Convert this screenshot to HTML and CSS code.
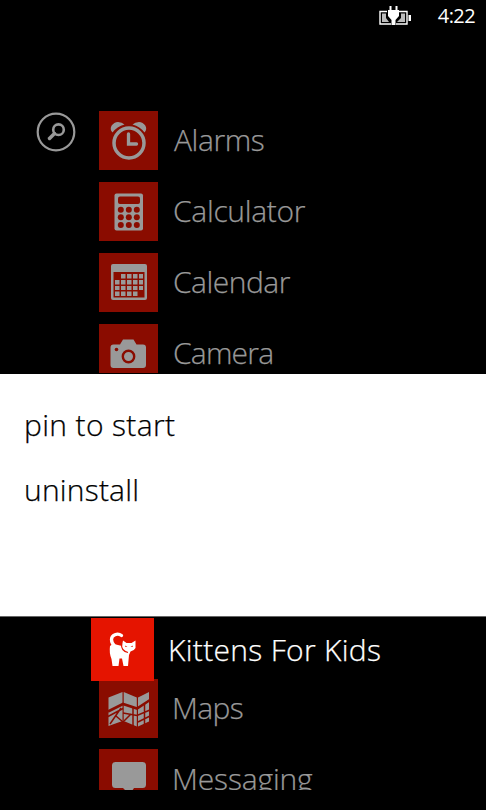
FILE: index.html
```html
<!DOCTYPE html>
<html lang="en">
<head>
  <meta charset="utf-8">
  <title>Apps</title>
  <link rel="stylesheet" href="styles.css">
</head>
<body>
  <div class="phone">
    <section class="top">
      <header class="status-bar">
        <svg class="battery" width="32" height="20" viewBox="0 0 32 20">
          <path d="M8 5.500H1V18H12M20 5.500H28V18H17" fill="none" stroke="#fff" stroke-width="1.400"/>
          <path d="M3 7.500H7V12L10 16H3ZM22 7.500H26V16H18L22 12Z" fill="#bbb"/>
          <path d="M29.500 9H32v6h-2.500z" fill="#fff"/>
          <path d="M10.500 0h2v4h4V0h2v4H20v6l-3.500 4v5h-4v-5L9 10V4h1.500z" fill="#fff"/>
        </svg>
        <span class="clock">4:22</span>
      </header>

      <div class="content">
        <svg class="search" width="40" height="40" viewBox="0 0 40 40" fill="none" stroke="#999">
          <circle cx="20" cy="20" r="18.300" stroke-width="2.200"/>
          <circle cx="22.500" cy="17.700" r="5.300" stroke-width="2.600"/>
          <path d="M18.500 21.500L13.500 26.500" stroke-width="3.500" stroke-linecap="round"/>
        </svg>

        <ul class="app-list">
          <li class="app">
            <div class="tile">
              <svg width="59" height="59" viewBox="0 0 59 59" fill="none" stroke="#999">
                <circle cx="30" cy="32" r="15" stroke-width="3.500"/>
                <path d="M29.500 23V33H37.500" stroke-width="3.300" stroke-linecap="round"/>
                <path d="M13.500 21.500C9 17 14 11 19 11Q23 11 25.500 13.500Q18 15.500 13.500 21.500ZM45.500 21.500C50 17 45 11 40 11Q36 11 33.500 13.500Q41 15.500 45.500 21.500Z" fill="#999" stroke="none"/>
              </svg>
            </div>
            <span class="name alarms">Alarms</span>
          </li>
          <li class="app">
            <div class="tile">
              <svg width="59" height="59" viewBox="0 0 59 59">
                <rect x="15.500" y="11.500" width="28.500" height="37" rx="2" fill="#999"/>
                <g fill="#8a0c00">
                  <rect x="19" y="14.500" width="22" height="7.500" rx="2"/>
                  <circle cx="21.800" cy="27.700" r="3"/><circle cx="29.800" cy="27.700" r="3"/><circle cx="37.800" cy="27.700" r="3"/>
                  <circle cx="21.800" cy="35.300" r="3"/><circle cx="29.800" cy="35.300" r="3"/><circle cx="37.800" cy="35.300" r="3"/>
                  <circle cx="21.800" cy="42.900" r="3"/><circle cx="29.800" cy="42.900" r="3"/><circle cx="37.800" cy="42.900" r="3"/>
                </g>
              </svg>
            </div>
            <span class="name calculator">Calculator</span>
          </li>
          <li class="app">
            <div class="tile">
              <svg width="59" height="59" viewBox="0 0 59 59">
                <rect x="12" y="11" width="36" height="36" rx="2" fill="#999"/>
                <path d="M14.500 19H45.500V44.500H14.500Z" fill="#8a0c00"/>
                <path d="M22 21h4.500v4.500H22zM28 21h4.500v4.500H28zM34 21h4.500v4.500H34zM40 21h4v4.500h-4zM16 27h4.500v4.500H16zM22 27h4.500v4.500H22zM28 27h4.500v4.500H28zM34 27h4.500v4.500H34zM40 27h4v4.500h-4zM16 33h4.500v4H16zM22 33h4.500v4H22zM28 33h4.500v4H28zM34 33h4.500v4H34zM40 33h4v4h-4zM16 38.500h4.500v4.500H16zM22 38.500h4.500v4.500H22zM28 38.500h4.500v4.500H28zM34 38.500h4.500v4.500H34z" fill="#999"/>
              </svg>
            </div>
            <span class="name calendar">Calendar</span>
          </li>
          <li class="app">
            <div class="tile">
              <svg width="59" height="59" viewBox="0 0 59 59">
                <path d="M14.500 20.500H21L24 15.500H34.500L37.500 20.500H44Q47 20.500 47 23.500V41Q47 44 44 44H14.500Q11.500 44 11.500 41V23.500Q11.500 20.500 14.500 20.500Z" fill="#999"/>
                <circle cx="29.500" cy="32.500" r="5.700" fill="none" stroke="#8a0c00" stroke-width="2.400"/>
                <circle cx="17.500" cy="25.500" r="1.800" fill="#8a0c00"/>
              </svg>
            </div>
            <span class="name camera">Camera</span>
          </li>
        </ul>
      </div>
    </section>

    <nav class="context-menu">
      <a class="menu-item pin">pin to start</a>
      <a class="menu-item uninstall">uninstall</a>
    </nav>

    <section class="bottom">
      <div class="app selected">
        <div class="tile">
          <svg width="63" height="63" viewBox="0 0 63 63">
            <path d="M30.500 17.500C26.500 14.500 20.500 17 20.500 21.500Q20.500 25 23.500 28" fill="none" stroke="#fff" stroke-width="3.300" stroke-linecap="round"/>
            <path d="M19 28Q21 25.500 25 26.500L31 28L32 22.500L35.500 25H40.500L44.500 22.500V30Q43 33 39.500 33.500L38 37L37 48H32.500L31 40.500H28.500L27.500 48H21.500L20.500 41Q18 35 19 28Z" fill="#fff"/>
            <path d="M30.500 26Q30 33 37 34.500" fill="none" stroke="#e51400" stroke-width="1.200"/>
            <path d="M34 27.500l2.500 1.500h-2zM42 27.500l-2.500 1.500h2z" fill="#e51400"/>
          </svg>
        </div>
        <span class="name kittens">Kittens For Kids</span>
      </div>
      <div class="app">
        <div class="tile">
          <svg width="59" height="59" viewBox="0 0 59 59">
            <path d="M9.500 18.500L23.500 13V42L9.500 47ZM24.700 13L37.800 18.500V47.500L24.700 42ZM39 18.500L50 13V42.500L39 47.500Z" fill="#999"/>
            <g fill="none" stroke="#8a0c00" stroke-width="1.500">
              <path d="M9 32.500L24 25L38 29.500L51 21" stroke-width="2.600"/>
              <path d="M9 37.500L24 29.500M11 45L22 29M17 37L24 43M24 34L38 36.500L51 31M34 29V47M45.500 25V46M25 42L32 35M39 43L51 37"/>
            </g>
          </svg>
        </div>
        <span class="name maps">Maps</span>
      </div>
      <div class="app last">
        <div class="tile">
          <svg width="59" height="59" viewBox="0 0 59 59">
            <path d="M16.500 13H43.500Q47 13 47 16.500V35.500Q47 39 43.500 39H35L33 42H27L24 39H16.500Q13 39 13 35.500V16.500Q13 13 16.500 13Z" fill="#999"/>
          </svg>
        </div>
        <span class="name messaging">Messaging</span>
      </div>
    </section>
  </div>
</body>
</html>
```
FILE: styles.css
```css
body {
  margin: 0;
  background: #000;
  font-family: "Open Sans", "Noto Sans", sans-serif;
  font-weight: 300;
}

.phone {
  width: 486px;
  height: 810px;
  overflow: hidden;
  display: flex;
  flex-direction: column;
}

.top {
  height: 374px;
  box-sizing: border-box;
  padding-bottom: 1px;
  overflow: hidden;
  flex-shrink: 0;
}

.status-bar {
  height: 32px;
  display: flex;
  justify-content: flex-end;
  align-items: center;
  padding-right: 11px;
  gap: 27px;
  color: #fff;
}

.battery {
  display: block;
  margin-top: -1px;
}

.clock {
  font-size: 20px;
  font-weight: 400;
  letter-spacing: -0.6px;
  line-height: 32px;
}

.content {
  display: flex;
  height: 341px;
  box-sizing: border-box;
  padding: 79px 0 0 36px;
  overflow: hidden;
}

.search {
  margin-top: 1px;
  margin-right: 23px;
  flex-shrink: 0;
}

.app-list {
  list-style: none;
  margin: 0;
  padding: 0;
  display: flex;
  flex-direction: column;
  gap: 12px;
}

.app {
  display: flex;
  height: 59px;
  flex-shrink: 0;
  gap: 15px;
  color: #999;
}

.tile {
  width: 59px;
  height: 59px;
  background: #8a0c00;
  flex-shrink: 0;
}

.tile svg {
  display: block;
}

.name {
  font-size: 30px;
  line-height: 58px;
  white-space: nowrap;
  -webkit-text-stroke: 0.25px currentColor;
}

.alarms {
  margin-left: 1px;
  letter-spacing: -0.4px;
}

.calculator {
  letter-spacing: -0.3px;
}

.calendar {
  letter-spacing: -0.5px;
}

.camera {
  letter-spacing: -0.8px;
}

/* context menu */
.context-menu {
  height: 243px;
  box-sizing: border-box;
  padding: 18px 24px 0;
  background: #fff;
  border-bottom: 1px solid #666;
  color: #000;
  display: flex;
  flex-direction: column;
  flex-shrink: 0;
}

.menu-item {
  font-size: 30px;
  line-height: 65px;
  -webkit-text-stroke: 0.25px currentColor;
}

.pin {
  letter-spacing: 0.35px;
}

.uninstall {
  letter-spacing: 0.2px;
}

/* list under the menu */
.bottom {
  height: 173px;
  box-sizing: border-box;
  padding: 1px 0 0 99px;
  overflow: hidden;
}

.selected {
  height: 63px;
  margin: 0 0 -2px -8px;
  color: #fff;
  position: relative;
  z-index: 1;
}

.selected .tile {
  width: 63px;
  height: 63px;
  background: #e51400;
}

.kittens {
  margin-left: -1px;
  line-height: 63px;
  letter-spacing: 0.3px;
}

.maps {
  margin-left: -1px;
  letter-spacing: -0.6px;
}

.messaging {
  margin-left: -1px;
  line-height: 60px;
  letter-spacing: -0.15px;
}

/* the row runs off the bottom of the list */
.last {
  height: 41px;
  margin-top: 11px;
  overflow: hidden;
}
```
